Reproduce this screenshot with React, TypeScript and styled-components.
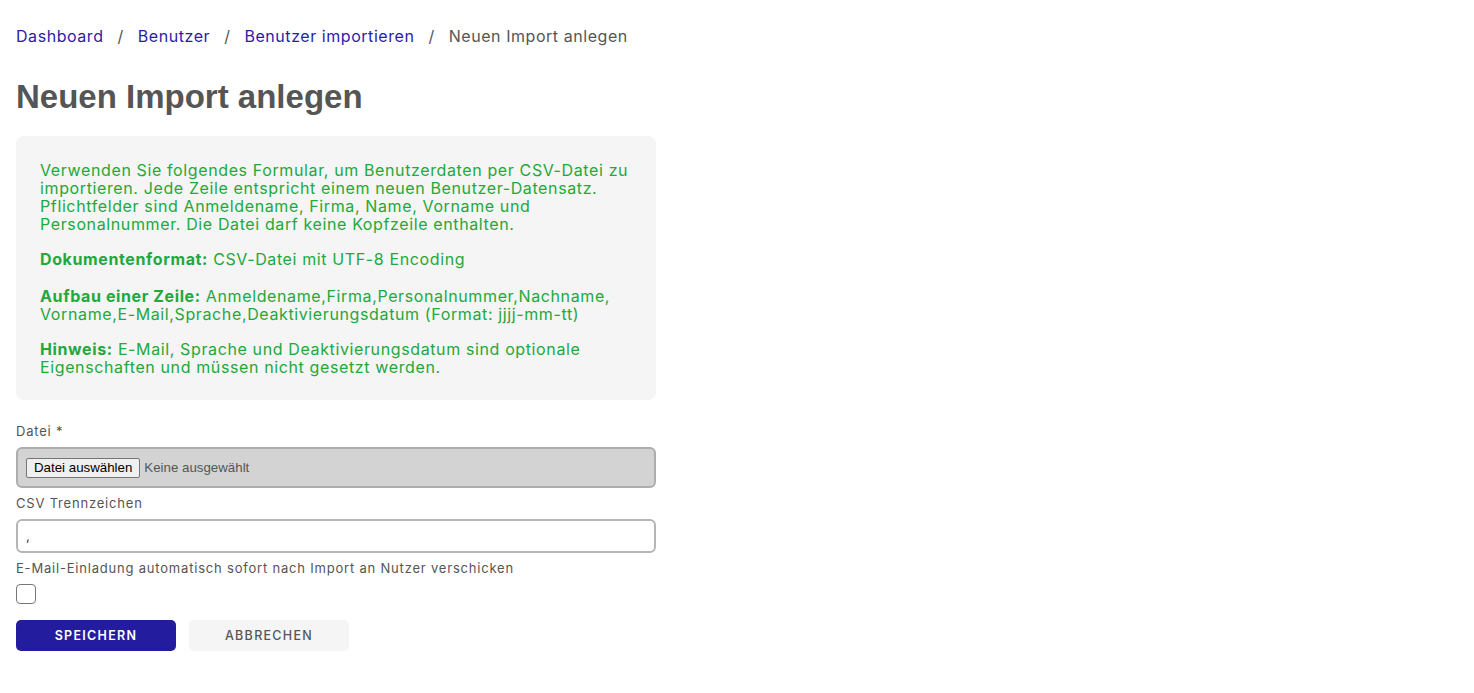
import React from 'react';
import styled, { createGlobalStyle } from 'styled-components';

const LINK = '#2a1ca6';
const GREEN = '#22a83c';
const TEXT = '#555';

const Global = createGlobalStyle`
    html, body {
        margin: 0;
        background: #fff;
    }
    * {
        box-sizing: border-box;
    }
`;

const Page = styled.div`
    font-family: Inter, 'Noto Sans', sans-serif;
    padding: 25px 16px 40px;
    width: 672px;
`;

const Crumbs = styled.nav`
    display: flex;
    align-items: center;
    gap: 14px;
    font-size: 16px;
    letter-spacing: 0.55px;
    line-height: 22px;
    color: ${TEXT};
`;
const Crumb = styled.a`
    color: ${LINK};
    text-decoration: none;
`;
const Sep = styled.span`
    color: ${TEXT};
`;

const Heading = styled.h1`
    font-family: 'Liberation Sans', Arial, sans-serif;
    font-size: 33px;
    font-weight: 700;
    color: #555;
    margin: 32px 0 21px;
    line-height: 36px;
`;

const InfoBox = styled.div`
    background: #f5f5f5;
    border-radius: 8px;
    padding: 25px 24px 24px;
    color: ${GREEN};
    font-size: 16px;
    letter-spacing: 0.62px;
    line-height: 18px;

    p {
        margin: 0 0 17px;
    }
    p:nth-child(2) {
        margin-bottom: 19px;
    }
    p:last-child {
        margin-bottom: 0;
    }
    strong {
        font-weight: 700;
    }
`;

const Form = styled.form`
    margin-top: 22px;
    display: flex;
    flex-direction: column;
`;
const Label = styled.label`
    display: block;
    font-size: 13px;
    letter-spacing: 0.8px;
    color: ${TEXT};
    line-height: 18px;
    margin-bottom: 7px;
`;
const Field = styled.div`
    margin-bottom: 6px;
`;
const FileBox = styled.div`
    display: flex;
    align-items: center;
    height: 41px;
    padding: 0 8px;
    background: #d3d3d3;
    border: 2px solid #adadad;
    border-radius: 6px;
    font-family: 'Liberation Sans', Arial, sans-serif;
    font-size: 13.3px;
`;
const FileButton = styled.span`
    display: inline-block;
    background: #efefef;
    border: 1px solid #767676;
    border-radius: 2px;
    padding: 1px 7px;
    color: #000;
    margin-right: 4px;
    line-height: 16px;
`;
const FileHint = styled.span`
    color: #555;
`;
const TextInput = styled.input`
    display: block;
    width: 100%;
    height: 34px;
    border: 2px solid #b5b5b5;
    border-radius: 6px;
    padding: 0 8px;
    font-family: inherit;
    font-size: 13px;
    color: #333;
    background: #fff;
    outline: none;
`;
const Check = styled.span`
    display: block;
    width: 20px;
    height: 20px;
    border: 1.5px solid #777;
    border-radius: 4px;
    margin-top: 2px;
`;
const Actions = styled.div`
    display: flex;
    gap: 13px;
    margin-top: 10px;
`;
const Button = styled.button<{ $primary?: boolean }>`
    width: 160px;
    height: 31px;
    border: none;
    border-radius: 5px;
    font-family: inherit;
    font-size: 12.5px;
    font-weight: ${p => (p.$primary ? 600 : 500)};
    letter-spacing: 1.3px;
    text-transform: uppercase;
    background: ${p => (p.$primary ? '#241c9f' : '#f5f5f5')};
    color: ${p => (p.$primary ? '#fff' : '#555')};
    cursor: pointer;
`;

export default function App() {
    return (
        <Page>
            <Global />
            <Crumbs>
                <Crumb href="#">Dashboard</Crumb>
                <Sep>/</Sep>
                <Crumb href="#">Benutzer</Crumb>
                <Sep>/</Sep>
                <Crumb href="#">Benutzer importieren</Crumb>
                <Sep>/</Sep>
                <span>Neuen Import anlegen</span>
            </Crumbs>
            <Heading>Neuen Import anlegen</Heading>
            <InfoBox>
                <p>
                    Verwenden Sie folgendes Formular, um Benutzerdaten per CSV-Datei zu importieren. Jede Zeile
                    entspricht einem neuen Benutzer-Datensatz. Pflichtfelder sind Anmeldename, Firma, Name, Vorname
                    und Personalnummer. Die Datei darf keine Kopfzeile enthalten.
                </p>
                <p>
                    <strong>Dokumentenformat:</strong> CSV-Datei mit UTF-8 Encoding
                </p>
                <p>
                    <strong>Aufbau einer Zeile:</strong> Anmeldename,Firma,Personalnummer,Nachname,
                    Vorname,E-Mail,Sprache,Deaktivierungsdatum (Format: jjjj-mm-tt)
                </p>
                <p>
                    <strong>Hinweis:</strong> E-Mail, Sprache und Deaktivierungsdatum sind optionale Eigenschaften
                    und müssen nicht gesetzt werden.
                </p>
            </InfoBox>
            <Form onSubmit={e => e.preventDefault()}>
                <Field>
                    <Label>Datei *</Label>
                    <FileBox>
                        <FileButton>Datei auswählen</FileButton>
                        <FileHint>Keine ausgewählt</FileHint>
                    </FileBox>
                </Field>
                <Field>
                    <Label>CSV Trennzeichen</Label>
                    <TextInput defaultValue="," />
                </Field>
                <Field>
                    <Label>E-Mail-Einladung automatisch sofort nach Import an Nutzer verschicken</Label>
                    <Check />
                </Field>
                <Actions>
                    <Button $primary type="submit">
                        Speichern
                    </Button>
                    <Button type="button">Abbrechen</Button>
                </Actions>
            </Form>
        </Page>
    );
}
